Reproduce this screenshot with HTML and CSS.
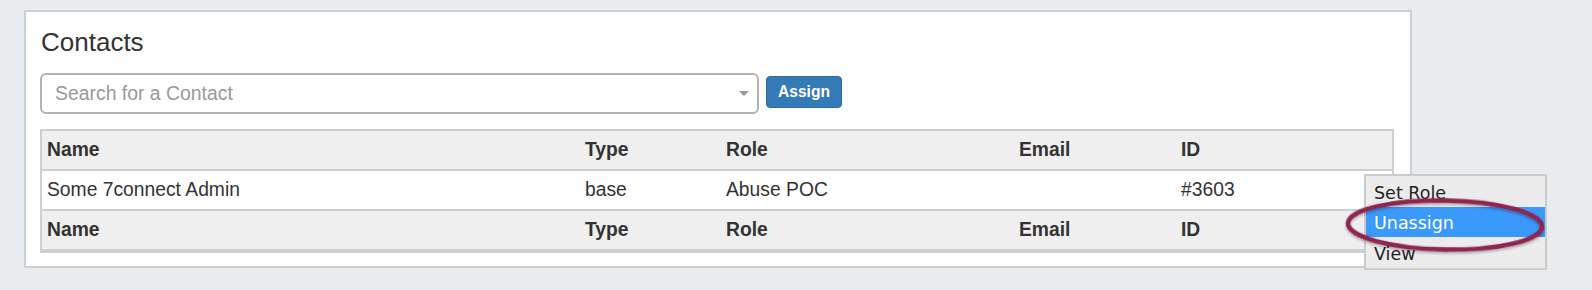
FILE: index.html
```html
<!DOCTYPE html>
<html>
<head>
<meta charset="utf-8">
<link rel="stylesheet" href="styles.css">
</head>
<body>
<div class="panel">
  <h2 class="title">Contacts</h2>
  <div class="assign-row">
    <div class="select">
      <span class="placeholder">Search for a Contact</span>
      <span class="caret"></span>
    </div>
    <button class="btn">Assign</button>
  </div>
  <table class="grid">
    <colgroup>
      <col class="c-name"><col class="c-type"><col class="c-role"><col class="c-email"><col class="c-id">
    </colgroup>
    <thead>
      <tr><th>Name</th><th>Type</th><th>Role</th><th>Email</th><th>ID</th></tr>
    </thead>
    <tbody>
      <tr><td>Some 7connect Admin</td><td>base</td><td>Abuse POC</td><td></td><td>#3603</td></tr>
    </tbody>
    <tfoot>
      <tr><th>Name</th><th>Type</th><th>Role</th><th>Email</th><th>ID</th></tr>
    </tfoot>
  </table>
</div>
<ul class="menu">
  <li>Set Role</li>
  <li class="active">Unassign</li>
  <li>View</li>
</ul>
<svg class="circle" width="220" height="70" viewBox="0 0 220 70">
  <defs>
    <filter id="sh" x="-10%" y="-30%" width="120%" height="160%">
      <feDropShadow dx="0" dy="1.5" stdDeviation="1.5" flood-color="#000" flood-opacity="0.35"/>
    </filter>
  </defs>
  <ellipse cx="110" cy="35" rx="97" ry="24.5" fill="none" stroke="#8f2550" stroke-width="4.5" transform="rotate(1 110 35)" filter="url(#sh)"/>
</svg>
</body>
</html>
```

FILE: styles.css
```css
html, body {
  margin: 0;
  padding: 0;
}
body {
  background: #e9ecef;
  padding: 10px 0 0 24px;
  font-family: "Liberation Sans", Arial, Helvetica, sans-serif;
  color: #333;
  height: 280px;
  overflow: hidden;
}
.panel {
  box-sizing: border-box;
  width: 1388px;
  background: #fff;
  border: 2px solid #cfcfcf;
  padding: 17px 16px 13px 14px;
}
.title {
  margin: 0;
  font-size: 26px;
  line-height: 26px;
  font-weight: normal;
  color: #333;
  padding-left: 1px;
}
.assign-row {
  display: flex;
  align-items: flex-start;
  gap: 7px;
  margin-top: 18px;
}
.select {
  box-sizing: border-box;
  width: 719px;
  height: 41px;
  border: 2px solid #b3b3b3;
  border-radius: 6px;
  display: flex;
  align-items: center;
  justify-content: space-between;
  padding: 0 8px 0 13px;
}
.placeholder {
  font-size: 19.4px;
  color: #999;
}
.caret {
  width: 0;
  height: 0;
  border-left: 5px solid transparent;
  border-right: 5px solid transparent;
  border-top: 5px solid #999;
}
.btn {
  box-sizing: border-box;
  margin-top: 3px;
  width: 76px;
  height: 32px;
  background: #337ab7;
  border: 1px solid #2e6da4;
  border-radius: 4px;
  color: #fff;
  font-family: "Liberation Sans", Arial, sans-serif;
  font-weight: bold;
  font-size: 15.6px;
  padding: 0;
}
.grid {
  margin-top: 15px;
  width: 1354px;
  border-collapse: separate;
  border-spacing: 0;
  border: 2px solid #cfcfcf;
  border-bottom-width: 4px;
  table-layout: fixed;
  font-size: 19.3px;
}
.c-name { width: 538px; }
.c-type { width: 141px; }
.c-role { width: 293px; }
.c-email { width: 162px; }
.c-id { width: 216px; }
.grid th, .grid td {
  text-align: left;
  padding: 0 0 0 5px;
  height: 38px;
  color: #333;
}
.grid th {
  background: #efefef;
  font-weight: bold;
}
.grid td {
  background: #fff;
  border-top: 2px solid #cfcfcf;
  border-bottom: 2px solid #cfcfcf;
}
.menu {
  position: absolute;
  left: 1364px;
  top: 174px;
  box-sizing: border-box;
  width: 183px;
  margin: 0;
  padding: 0;
  list-style: none;
  background: #ececec;
  border: 2px solid #cbcbcb;
  font-family: "DejaVu Sans", Verdana, sans-serif;
  font-size: 17.5px;
  color: #222;
}
.menu li {
  box-sizing: border-box;
  height: 31px;
  line-height: 31px;
  padding: 2px 0 0 8px;
}
.menu li.active {
  background: #3b99fc;
  color: #fff;
  height: 30px;
  line-height: 28px;
}
.circle {
  position: absolute;
  left: 1335px;
  top: 190px;
}
```
